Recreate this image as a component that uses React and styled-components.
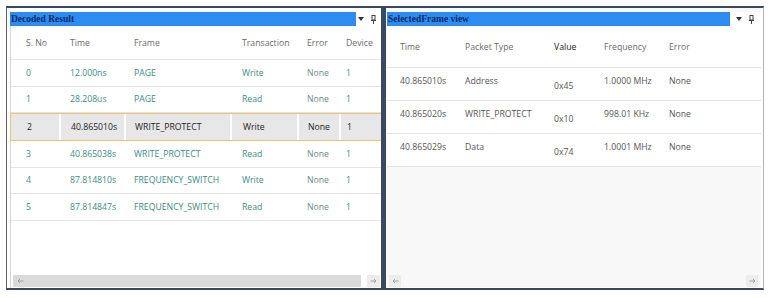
import React from "react";
import styled, { createGlobalStyle, css } from "styled-components";

const GlobalStyle = createGlobalStyle`
  html, body { margin: 0; padding: 0; background: #ffffff; }
  body { font-family: "Open Sans", "Noto Sans", sans-serif; }
  #root { width: 768px; height: 298px; }
`;

const Frame = styled.div`
  display: flex;
  margin: 6px 0 0 6px;
  width: 756px;
  height: 280px;
  border-top: 2px solid #3b4960;
  border-bottom: 2px solid #3b4960;
  border-left: 1px solid #55627a;
  border-right: 1px solid #b4b4b4;
`;

const Panel = styled.section`
  display: flex;
  flex-direction: column;
  width: ${(p) => p.$width}px;
  background: ${(p) => p.$bg};
  padding-left: ${(p) => p.$padLeft}px;
  box-sizing: border-box;
  min-width: 0;
`;

const Splitter = styled.div`
  width: 5px;
  background: #3b4960;
  flex: none;
`;

const TitleRow = styled.div`
  display: flex;
  align-items: center;
  height: 14px;
  margin-top: 4px;
  background: #ffffff;
`;

const TitleBar = styled.div`
  flex: 1;
  height: 14px;
  background: #2c8cf2;
  color: #0c2868;
  font-family: "Liberation Serif", "Times New Roman", serif;
  font-weight: bold;
  font-size: 9.5px;
  line-height: 14px;
  padding-left: 1px;
  white-space: nowrap;
`;

const TitleIcons = styled.div`
  display: flex;
  align-items: center;
  justify-content: flex-end;
  gap: 7px;
  width: ${(p) => p.$width}px;
  padding-right: ${(p) => p.$padRight}px;
  box-sizing: border-box;
`;

const Grid = styled.div`
  display: grid;
  grid-template-columns: ${(p) => p.$cols};
  font-size: 8.7px;
  border-bottom: 1px solid #e4e4e4;
  box-sizing: border-box;
  ${(p) =>
    p.$header &&
    css`
      color: #6a6a6a;
    `}
  ${(p) =>
    p.$selected &&
    css`
      background: #e7e7e7;
      border: 1.5px solid #efc26c;
      color: #222222;
      margin-left: -1px;
      margin-right: -1px;
    `}
`;

const Cell = styled.div`
  height: ${(p) => p.$h}px;
  padding-left: ${(p) => p.$pad}px;
  padding-top: ${(p) => p.$top ?? 0}px;
  display: flex;
  align-items: ${(p) => (p.$top != null ? "flex-start" : "center")};
  white-space: nowrap;
  overflow: hidden;
  box-sizing: border-box;
  color: ${(p) => p.$color || "inherit"};
  ${(p) =>
    p.$divider &&
    css`
      border-left: 2px solid #ffffff;
    `}
`;

const TableArea = styled.div`
  flex: 1;
  display: flex;
  flex-direction: column;
  border-left: ${(p) => (p.$lined ? "1px solid #d6d6d6" : "none")};
  background: #ffffff;
`;

const Filler = styled.div`
  flex: 1;
  background: ${(p) => p.$bg};
`;

const ScrollBar = styled.div`
  display: flex;
  align-items: center;
  height: 12px;
  margin-bottom: 1px;
  background: ${(p) => p.$bg};
`;

const Track = styled.div`
  flex: 1;
  height: 12px;
  background: ${(p) => p.$bg};
  display: flex;
  align-items: center;
  margin: 0 ${(p) => p.$gap}px 0 ${(p) => p.$lead}px;
`;

const ArrowBtn = styled.div`
  width: ${(p) => p.$w}px;
  height: 12px;
  display: flex;
  align-items: center;
  justify-content: center;
  background: ${(p) => p.$bg || "transparent"};
  margin: ${(p) => p.$margin || "0"};
  flex: none;
`;

const TEAL = "#3a8c82";
const NONE = "#6f8986";

const DownTri = () => (
  <svg width="6" height="4" viewBox="0 0 6 4">
    <path d="M0 0 L6 0 L3 4 Z" fill="#333" />
  </svg>
);

const Pin = () => (
  <svg width="5" height="9" viewBox="0 0 5 9">
    <rect x="1" y="0.5" width="3" height="4.5" fill="none" stroke="#444" strokeWidth="1" />
    <line x1="0" y1="5.5" x2="5" y2="5.5" stroke="#444" strokeWidth="1" />
    <line x1="2.5" y1="5.5" x2="2.5" y2="9" stroke="#444" strokeWidth="1" />
  </svg>
);

const Arrow = ({ dir }) => (
  <svg width="7" height="6" viewBox="0 0 7 6">
    {dir === "left" ? (
      <path d="M6.5 3 H1 M3 1 L1 3 L3 5" fill="none" stroke="#9a9a9a" strokeWidth="0.9" />
    ) : (
      <path d="M0.5 3 H6 M4 1 L6 3 L4 5" fill="none" stroke="#9a9a9a" strokeWidth="0.9" />
    )}
  </svg>
);

const LEFT_COLS = "48px 65px 106px 67px 42px 42px";
const LEFT_PADS = [15, 11, 10, 12, 10, 7];

const leftRows = [
  ["0", "12.000ns", "PAGE", "Write", "None", "1"],
  ["1", "28.208us", "PAGE", "Read", "None", "1"],
  ["2", "40.865010s", "WRITE_PROTECT", "Write", "None", "1"],
  ["3", "40.865038s", "WRITE_PROTECT", "Read", "None", "1"],
  ["4", "87.814810s", "FREQUENCY_SWITCH", "Write", "None", "1"],
  ["5", "87.814847s", "FREQUENCY_SWITCH", "Read", "None", "1"],
];

const RIGHT_COLS = "65px 89px 50px 65px 80px";
const RIGHT_PADS = [13, 13, 13, 13, 13];

const rightRows = [
  ["40.865010s", "Address", "0x45", "1.0000 MHz", "None"],
  ["40.865020s", "WRITE_PROTECT", "0x10", "998.01 KHz", "None"],
  ["40.865029s", "Data", "0x74", "1.0001 MHz", "None"],
];

function DecodedResult() {
  return (
    <Panel $width={374} $bg="#ffffff" $padLeft={3}>
      <TitleRow>
        <TitleBar>Decoded Result</TitleBar>
        <TitleIcons $width={25} $padRight={5}>
          <DownTri />
          <Pin />
        </TitleIcons>
      </TitleRow>
      <TableArea $lined>
        <Grid $cols={LEFT_COLS} $header>
          {["S. No", "Time", "Frame", "Transaction", "Error", "Device"].map((h, i) => (
            <Cell key={h} $h={33} $pad={LEFT_PADS[i]}>
              {h}
            </Cell>
          ))}
        </Grid>
        {leftRows.map((r, ri) => {
          const sel = ri === 2;
          return (
            <Grid key={ri} $cols={LEFT_COLS} $selected={sel}>
              {r.map((v, i) => (
                <Cell
                  key={i}
                  $h={sel ? 26 : 25.5}
                  $pad={sel ? (i === 0 ? LEFT_PADS[i] + 1 : LEFT_PADS[i] - 1) : LEFT_PADS[i]}
                  $divider={sel && i > 0}
                  $color={sel ? undefined : i === 4 ? NONE : TEAL}
                >
                  {v}
                </Cell>
              ))}
            </Grid>
          );
        })}
        <Filler $bg="#ffffff" />
        <ScrollBar $bg="#ffffff">
          <Track $bg="#dadada" $gap={6} $lead={2}>
            <ArrowBtn $w={14}>
              <Arrow dir="left" />
            </ArrowBtn>
          </Track>
          <ArrowBtn $w={13} $bg="#ececec" $margin="0 1px 0 0">
            <Arrow dir="right" />
          </ArrowBtn>
        </ScrollBar>
      </TableArea>
    </Panel>
  );
}

function SelectedFrame() {
  return (
    <Panel $width={375} $bg="#f8f8f8" $padLeft={1}>
      <TitleRow>
        <TitleBar>SelectedFrame view</TitleBar>
        <TitleIcons $width={31} $padRight={7}>
          <DownTri />
          <Pin />
        </TitleIcons>
      </TitleRow>
      <TableArea>
        <Grid $cols={RIGHT_COLS} $header>
          {["Time", "Packet Type", "Value", "Frequency", "Error"].map((h, i) => (
            <Cell key={h} $h={41} $pad={RIGHT_PADS[i]} $color={i === 2 ? "#222" : undefined}>
              {h}
            </Cell>
          ))}
        </Grid>
        {rightRows.map((r, ri) => (
          <Grid key={ri} $cols={RIGHT_COLS}>
            {r.map((v, i) => (
              <Cell
                key={i}
                $h={32}
                $pad={RIGHT_PADS[i]}
                $top={i === 2 ? 12 : 7}
                $color="#555555"
              >
                {v}
              </Cell>
            ))}
          </Grid>
        ))}
        <Filler $bg="#f8f8f8" />
        <ScrollBar $bg="#f8f8f8">
          <ArrowBtn $w={12} $bg="#ececec" $margin="0 0 0 2px">
            <Arrow dir="left" />
          </ArrowBtn>
          <Track $bg="transparent" $gap={0} $lead={0} />
          <ArrowBtn $w={12} $bg="#ececec" $margin="0 3px 0 0">
            <Arrow dir="right" />
          </ArrowBtn>
        </ScrollBar>
      </TableArea>
    </Panel>
  );
}

export default function App() {
  return (
    <>
      <GlobalStyle />
      <Frame>
        <DecodedResult />
        <Splitter />
        <SelectedFrame />
      </Frame>
    </>
  );
}
